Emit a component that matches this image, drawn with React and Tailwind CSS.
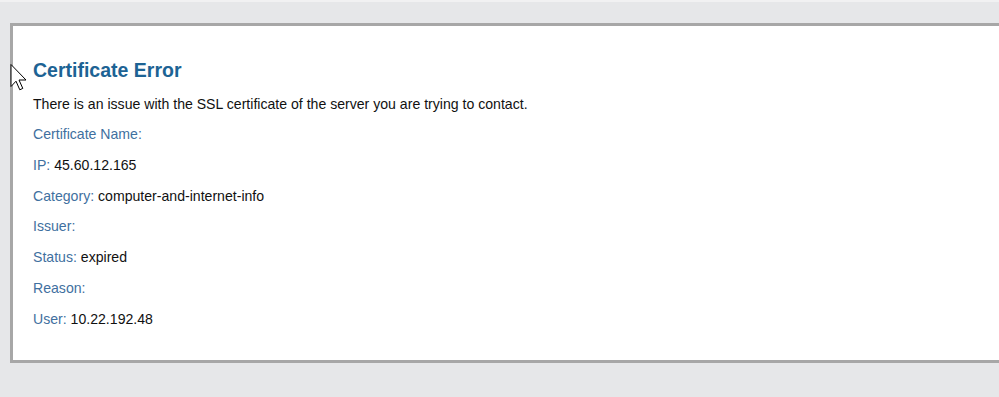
export default function App() {
    const rows = [
        { label: 'Certificate Name:', value: '' },
        { label: 'IP:', value: '45.60.12.165' },
        { label: 'Category:', value: 'computer-and-internet-info' },
        { label: 'Issuer:', value: '' },
        { label: 'Status:', value: 'expired' },
        { label: 'Reason:', value: '' },
        { label: 'User:', value: '10.22.192.48' },
    ];

    return (
        <div className="relative h-[397px] w-[999px] overflow-hidden bg-[#e6e7e9] border-t-2 border-[#f1f1f2] pt-[21px] pl-[10px] font-['Liberation_Sans',sans-serif]">
            {/* main panel, runs off the right edge */}
            <div className="h-[340px] bg-white border-[3px] border-r-0 border-[#a7a7a7] pl-[20px] pt-[32px]">
                <h1 className="text-[19.5px] leading-[24px] font-bold text-[#1d6394]">Certificate Error</h1>
                <p className="mt-[7px] text-[14.1px] leading-[30px] text-[#111]">
                    There is an issue with the SSL certificate of the server you are trying to contact.
                </p>
                <div className="flex flex-col">
                    {rows.map((row, index) => (
                        <p key={index} className="text-[14.1px] leading-[30.8px] text-[#111]">
                            <span className="text-[#3f70a0]">{row.label}</span>
                            {row.value && ' ' + row.value}
                        </p>
                    ))}
                </div>
            </div>

            {/* mouse pointer */}
            <svg className="absolute left-[10px] top-[62px]" width="18" height="28" viewBox="0 0 18 28">
                <path d="M1 0.5 L1 22.5 L6 17.2 L9.8 25.8 L12.8 24.4 L9 16 L16 16 Z" fill="#fff" stroke="#000" strokeWidth="1" />
            </svg>
        </div>
    );
}
